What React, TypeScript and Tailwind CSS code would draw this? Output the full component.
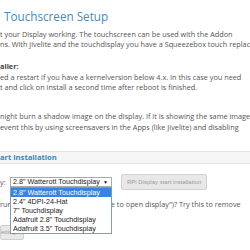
export default function App() {
  const options = [
    '2.8" Watterott Touchdisplay',
    '2.4" 4DPI-24-Hat',
    '7" Touchdisplay',
    'Adafruit 2.8" Touchdisplay',
    'Adafruit 3.5" Touchdisplay',
  ];

  return (
    <div className="w-[250px] h-[250px] overflow-hidden bg-white text-[#555] font-['Open_Sans',sans-serif]">
      <h1 className="pt-[9px] pl-[4px] text-[11.7px] leading-[14px] text-[#3f8cbf] whitespace-nowrap">
        Touchscreen Setup
      </h1>

      <div className="mt-[6px] text-[7.3px] leading-[10px] whitespace-nowrap">
        <p className="h-[10px]">t your Display working. The touchscreen can be used with the Addon</p>
        <p className="h-[10px]">ns. With jivelite and the touchdisplay you have a Squeezebox touch replacement</p>
      </div>

      <div className="mt-[12px] text-[7.3px] leading-[10px] whitespace-nowrap">
        <p className="h-[11px] font-bold text-[#444]">aller:</p>
        <p className="h-[10px]">ed a restart if you have a kernelversion below 4.x. In this case you need</p>
        <p className="h-[10px]">t and click on install a second time after reboot is finished.</p>
      </div>

      <div className="mt-[19px] text-[7.3px] leading-[10px] whitespace-nowrap">
        <p className="h-[11px]">night burn a shadow image on the display. If it is showing the same image</p>
        <p className="h-[10px]">event this by using screensavers in the Apps (like Jivelite) and disabling</p>
      </div>

      <div className="mt-[19px] h-[13px] bg-[#f5f5f5] border-y border-[#e3e3e3] flex items-center">
        <span className="text-[7.6px] font-bold text-[#3a87b8] whitespace-nowrap">art installation</span>
      </div>

      <div className="mt-[10px] flex items-center h-[16px]">
        <span className="text-[7.3px] w-[10px] whitespace-nowrap">y:</span>
        <div className="relative w-[102px]">
          <div className="h-[10px] border border-[#a9a9a9] bg-white flex items-center justify-between pl-[2px] pr-[3px] font-['Liberation_Sans',Arial,sans-serif] text-[7.2px] text-[#222]">
            <span className="whitespace-nowrap leading-[8px]">2.8" Watterott Touchdisplay</span>
            <span className="text-[5px] leading-[8px]">▼</span>
          </div>
          <ul className="absolute left-0 top-full w-full bg-white border border-[#7f9db9] font-['Liberation_Sans',Arial,sans-serif] text-[7.2px] text-[#222] z-10">
            {options.map((o, i) => (
              <li
                key={o}
                className={
                  "h-[9px] leading-[9px] pl-[2px] whitespace-nowrap " +
                  (i === 0 ? "bg-[#3584e4] text-white" : "")
                }
              >
                {o}
              </li>
            ))}
          </ul>
        </div>
        <button className="ml-[9px] h-[16px] px-[5px] bg-[#e8e8e8] border border-[#d0d0d0] rounded-[2px] font-['Liberation_Sans',Arial,sans-serif] text-[6px] text-[#9a9a9a] whitespace-nowrap">
          RPi Display start installation
        </button>
      </div>

      <p className="mt-[9px] text-[7.3px] leading-[10px] whitespace-nowrap">
        run into blinking screens ("Unable to open display")? Try this to remove
      </p>

      <div className="mt-[7px]">
        <button className="h-[15px] w-[24px] overflow-hidden bg-[#e8e8e8] border border-[#d0d0d0] rounded-[2px] text-[6px] text-[#999] whitespace-nowrap text-left font-['Liberation_Sans',Arial,sans-serif]">
          etting
        </button>
      </div>
    </div>
  );
}
